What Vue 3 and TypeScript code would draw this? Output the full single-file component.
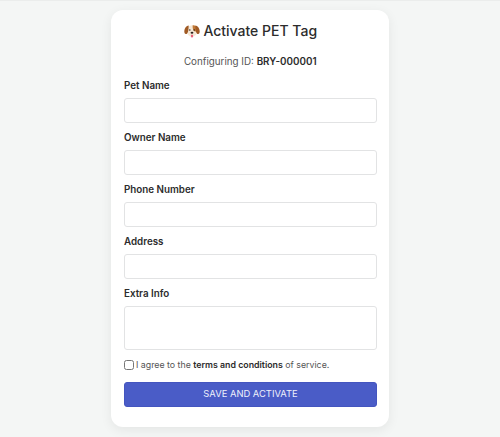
<script setup lang="ts">
const fields: string[] = ['Pet Name', 'Owner Name', 'Phone Number', 'Address']
</script>

<template>
  <main class="page">
    <form class="card" @submit.prevent>
      <h1 class="title">
        <svg class="dog" viewBox="0 0 16 16" aria-hidden="true">
          <ellipse cx="8" cy="8" rx="5.4" ry="5.8" fill="#f6e9d8" />
          <path d="M8.6 2.4c2.4-.3 4.4 1.2 4.6 3.8.1 1.5-1 2.4-2.2 2.2C9.5 8.200 8.500 6.200 8.600 2.400Z" fill="#c17a38" />
          <path d="M4.700 2.600C2.300 2.800.5 5.200.3 8c-.1 1.800.6 3.100 1.500 3.100 1.300 0 2.200-1.800 2.500-3.700.2-1.700.4-3.300.4-4.800Z" fill="#a05a24" />
          <path d="M11.300 2.600c2.400.2 4.200 2.600 4.400 5.400.1 1.800-.6 3.100-1.500 3.100-1.300 0-2.200-1.800-2.500-3.700-.2-1.700-.4-3.300-.4-4.800Z" fill="#a05a24" />
          <circle cx="5.800" cy="7" r=".75" fill="#2b211b" />
          <circle cx="10.200" cy="7" r=".75" fill="#2b211b" />
          <ellipse cx="8" cy="9.800" rx="1.400" ry="1" fill="#2b211b" />
          <ellipse cx="8" cy="13" rx="1.200" ry="1.500" fill="#e8607a" />
        </svg>
        <span>Activate PET Tag</span>
      </h1>
      <p class="config">Configuring ID: <strong>BRY-000001</strong></p>

      <div v-for="f in fields" :key="f" class="field">
        <label class="label">{{ f }}</label>
        <input class="control" type="text" />
      </div>
      <div class="field">
        <label class="label">Extra Info</label>
        <textarea class="control area"></textarea>
      </div>

      <label class="agree">
        <input class="check" type="checkbox" />
        <span>I agree to the <strong>terms and conditions</strong> of service.</span>
      </label>
      <button class="submit" type="submit">SAVE AND ACTIVATE</button>
    </form>
  </main>
</template>

<style>
html, body { margin: 0; background: #f4f6f5; }
</style>

<style scoped>
.page {
  box-sizing: border-box;
  width: 500px;
  height: 437px;
  padding-top: 10px;
  display: flex;
  justify-content: center;
  background: #f4f6f5;
  border-top: 1px solid #ebedec;
  font-family: Inter, "Liberation Sans", sans-serif;
  overflow: hidden;
}
.card {
  box-sizing: border-box;
  width: 278px;
  height: 417px;
  margin-top: -1.500px;
  padding: 11.500px 12.500px 0 13px;
  background: #fff;
  border-radius: 12px;
  box-shadow: 0 3px 12px rgba(0, 0, 0, 0.07);
  color: #2c2c2c;
}
.title {
  margin: 0;
  height: 20px;
  display: flex;
  align-items: center;
  justify-content: center;
  gap: 4px;
  font-size: 14px;
  line-height: 20px;
  font-weight: 500;
  color: #2c2c2c;
}
.dog { width: 16px; height: 16px; flex: none; margin-left: 1px; margin-right: -1px; }
.config {
  margin: 13px 0 0;
  height: 16px;
  text-align: center;
  font-size: 9.800px;
  line-height: 16px;
  color: #555;
}
.config strong { font-weight: 600; color: #2c2c2c; }
.field { margin-top: 7.500px; }
.config + .field { margin-top: 8px; }
.label {
  display: block;
  height: 16px;
  margin-bottom: 4px;
  font-size: 9.800px;
  line-height: 16px;
  font-weight: 600;
  color: #2c2c2c;
}
.control {
  display: block;
  box-sizing: border-box;
  width: 253px;
  height: 24.500px;
  margin: 0;
  padding: 4px 8px;
  background: #fff;
  border: 1px solid #e2e3e4;
  border-radius: 3px;
  outline: none;
  font: inherit;
  resize: none;
}
.area { height: 44px; }
.agree {
  display: flex;
  align-items: center;
  gap: 2px;
  height: 16px;
  margin-top: 7px;
  font-size: 8.800px;
  line-height: 16px;
  color: #555;
}
.agree strong { font-weight: 600; color: #2c2c2c; }
.check {
  box-sizing: border-box;
  width: 10px;
  height: 10px;
  margin: 0;
  flex: none;
}
.submit {
  display: block;
  box-sizing: border-box;
  width: 253px;
  height: 24.700px;
  margin-top: 9px;
  padding: 0;
  background: #4a5cc7;
  border: 1px solid #4455bf;
  border-radius: 3px;
  color: #eef0fb;
  font-family: inherit;
  font-size: 9.400px;
  line-height: 22px;
}
</style>
